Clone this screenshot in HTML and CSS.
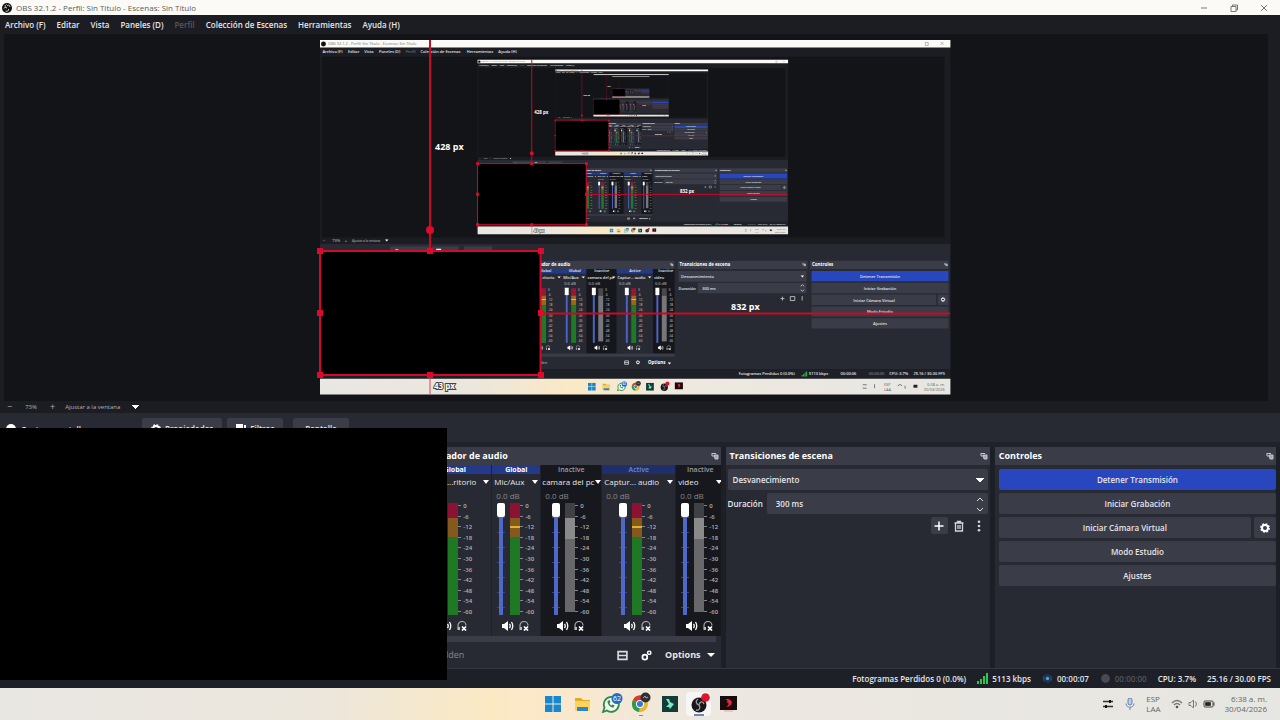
FILE: index.html
```html
<!DOCTYPE html>
<html lang="es">
<head>
    <meta charset="UTF-8">
    <meta name="viewport" content="width=device-width, initial-scale=1.0">
    <title>OBS 32.1.2 - Perfil: Sin Título - Escenas: Sin Título</title>
    <link rel="stylesheet" href="styles.css">
</head>
<body>
    <!-- Shared icons -->
    <svg class="defs" aria-hidden="true">
        <symbol id="obs" viewBox="0 0 20 20">
            <circle cx="10" cy="10" r="10" fill="#111"/>
            <path d="M9 3c-4 2-3 6 0 7M16 8c0-4-4-5-6-2M7 16c4 2 7-1 6-4M4 11c1-3 4-3 6-1" fill="none" stroke="#ccc" stroke-width="2"/>
        </symbol>
        <symbol id="speaker" viewBox="0 0 12 10">
            <path d="M0 3h2l4-3v10L2 7H0z" fill="#fff"/>
            <path d="M7.500 3q1.500 2 0 4M9.500 1q2.500 4 0 8" fill="none" stroke="#fff" stroke-width="1.300"/>
        </symbol>
        <symbol id="phones" viewBox="0 0 10 10">
            <path d="M1 9V4.500a4 4 0 0 1 8 0" fill="none" stroke="#aaa" stroke-width="1.200"/>
            <path d="M1 6h2v3H1z" fill="#bbb"/>
            <path d="M5 5.500l4 4M9 5.500l-4 4" stroke="#fff" stroke-width="1.700"/>
        </symbol>
        <symbol id="float" viewBox="0 0 8 8">
            <path d="M1 1.500h4M1 1v3h2" fill="none" stroke="#c5c6cb"/>
            <path d="M3 3h4v4H4z" fill="#a5a7ae" stroke="#c5c6cb"/>
        </symbol>
        <symbol id="gear" viewBox="0 0 10 10">
            <circle cx="5" cy="5" r="3" fill="none" stroke="#fff" stroke-width="2"/>
            <circle cx="5" cy="5" r="4.200" fill="none" stroke="#fff" stroke-width="1.400" stroke-dasharray="1.800 1.500"/>
        </symbol>
    </svg>

    <header class="titlebar">
        <svg class="app-icon"><use href="#obs"/></svg>
        <span class="title">OBS 32.1.2 - Perfil: Sin Título - Escenas: Sin Título</span>
        <button class="win-btn" aria-label="Minimizar"><svg viewBox="0 0 8 8"><path d="M1 4h6"/></svg></button>
        <button class="win-btn" aria-label="Restaurar"><svg viewBox="0 0 8 8"><path d="M1 2.500h5v5H1zM2.500 2.500V1h5v5H6"/></svg></button>
        <button class="win-btn" aria-label="Cerrar"><svg viewBox="0 0 8 8"><path d="M1 1l6 6M7 1L1 7"/></svg></button>
    </header>

    <nav class="menubar">
        <button>Archivo (F)</button>
        <button>Editar</button>
        <button>Vista</button>
        <button>Paneles (D)</button>
        <button disabled>Perfil</button>
        <button>Colección de Escenas</button>
        <button>Herramientas</button>
        <button>Ayuda (H)</button>
    </nav>

    <main class="preview">
        <svg class="scene" viewBox="320 40 630 355">
            <defs>
                <linearGradient id="bar">
                    <stop offset="0" stop-color="#e9e7e3"/>
                    <stop offset=".25" stop-color="#ece6dc"/>
                    <stop offset=".4" stop-color="#fbe9c4"/>
                    <stop offset=".55" stop-color="#efe9df"/>
                    <stop offset="1" stop-color="#e6e6e2"/>
                </linearGradient>
                <!-- Mixer channel, 48 wide -->
                <g id="scale" class="s-scale">
                    <text x="32" y="509">0</text><text x="32" y="520">-6</text><text x="32" y="530">-12</text>
                    <text x="32" y="541">-18</text><text x="32" y="551">-24</text><text x="32" y="562">-30</text>
                    <text x="32" y="572">-36</text><text x="32" y="583">-42</text><text x="32" y="593">-48</text>
                    <text x="32" y="604">-54</text><text x="32" y="614">-60</text>
                </g>
                <g id="strip-on">
                    <path d="M7 506h4v109H7z" fill="#4d63c4"/>
                    <path d="M5 503h8v15H5z" fill="#fff"/>
                    <path d="M18 504h10v15H18z" fill="#9c1535"/>
                    <path d="M18 519h10v20H18z" fill="#9a661c"/>
                    <path d="M18 526h10v2H18z" fill="#f0c22a"/>
                    <path d="M18 539h10v76H18z" fill="#1f7a28"/>
                    <use href="#scale"/>
                    <use href="#speaker" x="10" y="620" width="12" height="10"/>
                    <use href="#phones" x="27" y="620" width="10" height="10"/>
                </g>
                <g id="strip-off">
                    <path d="M7 506h4v109H7z" fill="#4d63c4"/>
                    <path d="M5 503h8v15H5z" fill="#fff"/>
                    <path d="M18 504h10v15H18z" fill="#47484b"/>
                    <path d="M18 519h10v93H18z" fill="#77777a"/>
                    <use href="#scale"/>
                    <use href="#speaker" x="10" y="620" width="12" height="10"/>
                    <use href="#phones" x="27" y="620" width="10" height="10"/>
                </g>
                <!-- Captured desktop, 1280x720 -->
                <g id="desktop">
                    <path d="M0 0h1280v720H0z" fill="#1c1d23"/>
                    <path d="M0 0h1280v15H0z" fill="#fbfaf6"/>
                    <circle cx="7" cy="8" r="5" fill="#111"/>
                    <text x="16" y="11" class="s-title">OBS 32.1.2 - Perfil: Sin Título - Escenas: Sin Título</text>
                    <path d="M1229 5h6v6h-6zM1260 4l6 6M1266 4l-6 6" fill="none" stroke="#777"/>
                    <g class="s-bold">
                        <text x="5" y="27">Archivo (F)</text><text x="57" y="27">Editar</text>
                        <text x="90" y="27">Vista</text><text x="120" y="27">Paneles (D)</text>
                        <text x="174" y="27" opacity=".35">Perfil</text>
                        <text x="204" y="27">Colección de Escenas</text>
                        <text x="298" y="27">Herramientas</text><text x="362" y="27">Ayuda (H)</text>
                    </g>
                    <path d="M4 34h1264v367H4z" fill="#131418"/>
                    <path d="M0 414h1280v254H0z" fill="#272a33"/>
                    <g class="s-text" opacity=".6">
                        <text x="6" y="410">−</text><text x="25" y="410">73%</text>
                        <text x="50" y="410">+</text><text x="65" y="410" class="s-small">Ajustar a la ventana</text>
                    </g>
                    <path d="M132 405h7l-3.500 4z" fill="#fff"/>
                    <path d="M142 419h80v22h-80zM227 419h55v22h-55zM292 419h58v22h-58z" fill="#3a3c47"/>
                    <path d="M152 428a4 3 0 0 1 8 0M236 424h10v4h-10z" fill="#fff"/>
                    <path d="M416 448h304v17H416zM726 448h264v17H726zM995 448h281v17H995z" fill="#3a3c47"/>
                    <g class="s-head">
                        <text x="421" y="459">Mezclador de audio</text>
                        <text x="730" y="459">Transiciones de escena</text>
                        <text x="999" y="459">Controles</text>
                        <text x="666" y="658">Options</text>
                    </g>
                    <use href="#float" x="710" y="452" width="8" height="8"/>
                    <use href="#float" x="979" y="452" width="8" height="8"/>
                    <use href="#float" x="1267" y="452" width="8" height="8"/>
                    <path d="M418 465h123v9H418zM602 465h74v9h-74z" fill="#233a8c"/>
                    <path d="M541 465h61v171h-61zM676 465h44v171h-44z" fill="#16171c"/>
                    <g class="s-text">
                        <text x="505" y="472">Global</text><text x="445" y="472">Global</text>
                        <text x="557" y="472">Inactive</text><text x="628" y="472">Active</text><text x="687" y="472">Inactive</text>
                        <text x="445" y="485">...ritorio</text><text x="494" y="485">Mic/Aux</text>
                        <text x="543" y="485">camara del pc</text><text x="604" y="485">Captur... audio</text><text x="678" y="485">video</text>
                    </g>
                    <path d="M482 480h7l-3.500 4zM531 480h7l-3.500 4zM593 480h7l-3.500 4zM666 480h7l-3.500 4zM706 655h7l-3.500 4z" fill="#fff"/>
                    <g class="s-text" opacity=".6">
                        <text x="496" y="498">0.0 dB</text><text x="545" y="498">0.0 dB</text>
                        <text x="607" y="498">0.0 dB</text><text x="680" y="498">0.0 dB</text>
                        <text x="447" y="658">den</text>
                    </g>
                    <use href="#strip-on" x="431"/><use href="#strip-on" x="492"/><use href="#strip-off" x="547"/>
                    <use href="#strip-on" x="614"/><use href="#strip-off" x="676"/>
                    <path d="M416 637h304v6H416z" fill="#3a3c47"/>
                    <path d="M618.500 651.500h8v7h-8zM618 655h9" fill="none" stroke="#ddd" stroke-width="1.500"/>
                    <use href="#gear" x="641" y="650" width="9" height="9"/>
                    <path d="M728 469h260v22H728zM767 493h221v21H767zM998 493h278v21H998zM998 517h253v21H998zM1254 517h22v21h-22zM998 541h278v21H998zM998 565h278v21H998z" fill="#3a3c47"/>
                    <path d="M998 469h278v21H998z" fill="#2846bd"/>
                    <path d="M976 478h7l-3.500 4z" fill="#fff"/>
                    <path d="M976 500l3.500-3 3.500 3M976 507l3.500 3 3.500-3M935 525h8M939 521v8M955 521h9v8h-9zM979 520v9" fill="none" stroke="#ddd" stroke-width="1.500"/>
                    <use href="#gear" x="1260" y="522" width="10" height="10"/>
                    <g class="s-text">
                        <text x="733" y="483">Desvanecimiento</text><text x="728" y="507">Duración</text><text x="776" y="507">300 ms</text>
                        <g text-anchor="middle">
                            <text x="1137" y="483">Detener Transmisión</text><text x="1137" y="507">Iniciar Grabación</text>
                            <text x="1125" y="531">Iniciar Cámara Virtual</text><text x="1137" y="555">Modo Estudio</text><text x="1137" y="579">Ajustes</text>
                        </g>
                    </g>
                    <path d="M0 669h1280v19H0z" fill="#1e2027"/>
                    <g class="s-text">
                        <text x="850" y="681">Fotogramas Perdidos 0 (0.0%)</text><text x="993" y="681">5113 kbps</text>
                        <text x="1057" y="681">00:00:06</text><text x="1114" y="681" opacity=".4">00:00:00</text>
                        <text x="1156" y="681">CPU: 3.7%</text><text x="1205" y="681">25.16 / 30.00 FPS</text>
                    </g>
                    <path d="M978 683v-3h2v3zM981 683v-5h2v5zM984 683v-8h2v8zM987 683v-10h2v10z" fill="#2fc04a"/>
                    <path d="M0 688h1280v32H0z" fill="url(#bar)"/>
                    <use href="#t-win" x="544" y="696" width="16" height="16"/>
                    <use href="#t-folder" x="573" y="696" width="17" height="16"/>
                    <use href="#t-wa" x="602" y="693" width="22" height="20"/>
                    <use href="#t-chrome" x="632" y="692" width="20" height="22"/>
                    <use href="#t-filmora" x="662" y="696" width="16" height="16"/>
                    <use href="#t-obs" x="691" y="693" width="19" height="20"/>
                    <use href="#t-red" x="720" y="695" width="17" height="16"/>
                    <g fill="#666" class="s-clock">
                        <text x="1145" y="702">ESP</text><text x="1145" y="713">LAA</text>
                        <text x="1233" y="702">6:38 a. m.</text><text x="1226" y="713">30/04/2026</text>
                    </g>
                    <path d="M1102 700h8M1102 707h8M1126 699v8M1173 702q5-5 9 0M1188 702v6" fill="none" stroke="#777" stroke-width="2"/>
                    <path d="M1205 700h8v6h-8z" fill="#222"/>
                    <path d="M0 428h447v252H0z"/>
                </g>
                <!-- Selection box, handles and spacing guides -->
                <g id="guides">
                    <path d="M430 40v210M541 313.500h409" stroke="#c80a25" stroke-width="2" fill="none"/>
                    <path d="M430 375v20" stroke="#d84a5c" fill="none"/>
                    <path d="M320 251h220.500v124H320z" stroke="#d3092a" stroke-width="2" fill="none"/>
                    <g fill="#dc0a2c">
                        <circle cx="430" cy="230" r="4"/>
                        <path d="M317 248h6v6h-6zM427 248h6v6h-6zM538 248h6v6h-6zM317 310h6v6h-6zM538 310h6v6h-6zM317 372h6v6h-6zM427 372h6v6h-6zM538 372h6v6h-6z"/>
                    </g>
                    <g class="s-px">
                        <text x="435" y="150">428 px</text>
                        <text x="731" y="310">832 px</text>
                        <text x="434" y="389" class="s-outline">43 px</text>
                    </g>
                </g>
                <!-- The capture shows itself, one level deeper each time -->
                <g id="shot1"><use href="#desktop"/></g>
                <g id="shot2"><use href="#desktop"/><use href="#shot1" transform="translate(320 40) scale(.4925)"/><use href="#guides"/></g>
                <g id="shot3"><use href="#desktop"/><use href="#shot2" transform="translate(320 40) scale(.4925)"/><use href="#guides"/></g>
                <g id="shot4"><use href="#desktop"/><use href="#shot3" transform="translate(320 40) scale(.4925)"/><use href="#guides"/></g>
                <g id="shot5"><use href="#desktop"/><use href="#shot4" transform="translate(320 40) scale(.4925)"/><use href="#guides"/></g>
            </defs>
            <use href="#shot5" transform="translate(320 40) scale(.4925)"/>
            <use href="#guides"/>
        </svg>
    </main>

    <div class="zoombar">
        <button aria-label="Alejar">−</button>
        <span class="zoom-value">73%</span>
        <button class="plus" aria-label="Acercar">+</button>
        <select class="zoom-mode" aria-label="Escala de la vista previa"><option>Ajustar a la ventana</option></select>
    </div>

    <div class="contextbar">
        <svg class="eye" viewBox="0 0 12 12"><circle cx="6" cy="6" r="6"/></svg>
        <span class="source-name">Captura pantalla</span>
        <button><svg viewBox="0 0 10 10"><use href="#gear"/></svg>Propiedades</button>
        <button><svg viewBox="0 0 10 10"><path d="M0 0h7v7H0zM8 1h2v9H3V8h5z" fill="#fff"/></svg>Filtros</button>
        <button class="wide">Pantalla</button>
    </div>

    <section class="docks">
        <div class="dock-space"></div>
        <div class="dock">
            <h2>Mezclador de audio <svg><use href="#float"/></svg></h2>
            <div class="mixer">
                <div class="strip first">
                    <div class="state global">Global</div>
                    <button class="name">Audi...ritorio</button>
                    <div class="db">0.0 dB</div>
                    <div class="levels">
                        <input type="range" class="fader" value="100" aria-label="Volumen escritorio">
                        <div class="meter"></div>
                        <ul class="scale"><li>0<li>-6<li>-12<li>-18<li>-24<li>-30<li>-36<li>-42<li>-48<li>-54<li>-60</ul>
                    </div>
                    <div class="strip-btns">
                        <button aria-label="Silenciar"><svg class="spk"><use href="#speaker"/></svg></button>
                        <button aria-label="Monitorizar"><svg><use href="#phones"/></svg></button>
                    </div>
                </div>
                <div class="strip mic">
                    <div class="state global">Global</div>
                    <button class="name">Mic/Aux</button>
                    <div class="db">0.0 dB</div>
                    <div class="levels">
                        <input type="range" class="fader" value="100" aria-label="Volumen Mic/Aux">
                        <div class="meter peak"></div>
                        <ul class="scale"><li>0<li>-6<li>-12<li>-18<li>-24<li>-30<li>-36<li>-42<li>-48<li>-54<li>-60</ul>
                    </div>
                    <div class="strip-btns">
                        <button aria-label="Silenciar"><svg class="spk"><use href="#speaker"/></svg></button>
                        <button aria-label="Monitorizar"><svg><use href="#phones"/></svg></button>
                    </div>
                </div>
                <div class="strip camera off">
                    <div class="state">Inactive</div>
                    <button class="name">camara del pc</button>
                    <div class="db">0.0 dB</div>
                    <div class="levels">
                        <input type="range" class="fader" value="100" aria-label="Volumen camara del pc">
                        <div class="meter"></div>
                        <ul class="scale"><li>0<li>-6<li>-12<li>-18<li>-24<li>-30<li>-36<li>-42<li>-48<li>-54<li>-60</ul>
                    </div>
                    <div class="strip-btns">
                        <button aria-label="Silenciar"><svg class="spk"><use href="#speaker"/></svg></button>
                        <button aria-label="Monitorizar"><svg><use href="#phones"/></svg></button>
                    </div>
                </div>
                <div class="strip capture">
                    <div class="state active">Active</div>
                    <button class="name">Captur... audio</button>
                    <div class="db">0.0 dB</div>
                    <div class="levels">
                        <input type="range" class="fader" value="100" aria-label="Volumen captura de audio">
                        <div class="meter peak"></div>
                        <ul class="scale"><li>0<li>-6<li>-12<li>-18<li>-24<li>-30<li>-36<li>-42<li>-48<li>-54<li>-60</ul>
                    </div>
                    <div class="strip-btns">
                        <button aria-label="Silenciar"><svg class="spk"><use href="#speaker"/></svg></button>
                        <button aria-label="Monitorizar"><svg><use href="#phones"/></svg></button>
                    </div>
                </div>
                <div class="strip video off">
                    <div class="state">Inactive</div>
                    <button class="name">video</button>
                    <div class="db">0.0 dB</div>
                    <div class="levels">
                        <input type="range" class="fader" value="100" aria-label="Volumen video">
                        <div class="meter"></div>
                        <ul class="scale"><li>0<li>-6<li>-12<li>-18<li>-24<li>-30<li>-36<li>-42<li>-48<li>-54<li>-60</ul>
                    </div>
                    <div class="strip-btns">
                        <button aria-label="Silenciar"><svg class="spk"><use href="#speaker"/></svg></button>
                        <button aria-label="Monitorizar"><svg><use href="#phones"/></svg></button>
                    </div>
                </div>
            </div>
            <div class="scrollbar"></div>
            <div class="mixer-footer">
                <span class="hidden-count">1 Hidden</span>
                <button aria-label="Diseño"><svg viewBox="0 0 10 10"><path d="M1 1.500h8v7H1zM1 5h8" fill="none" stroke="#ddd" stroke-width="1.500"/></svg></button>
                <button aria-label="Propiedades de audio"><svg viewBox="0 0 10 10"><circle cx="3.500" cy="6.500" r="2.200" fill="none" stroke="#fff" stroke-width="1.600"/><circle cx="7.500" cy="2.500" r="1.500" fill="none" stroke="#fff" stroke-width="1.300"/></svg></button>
                <button class="options">Options</button>
            </div>
        </div>

        <div class="dock">
            <h2>Transiciones de escena <svg><use href="#float"/></svg></h2>
            <div class="dock-body">
                <select class="transition" aria-label="Transición"><option>Desvanecimiento</option></select>
                <div class="duration">
                    <label for="duration">Duración</label>
                    <div class="spin">
                        <input type="text" id="duration" value="300 ms">
                        <svg viewBox="0 0 8 16"><path d="M1 5l3-3 3 3M1 12l3 3 3-3"/></svg>
                    </div>
                </div>
                <div class="tools">
                    <button class="add" aria-label="Añadir"><svg viewBox="0 0 12 12"><path d="M6 1.500v9M1.500 6h9" stroke="#fff" stroke-width="1.500"/></svg></button>
                    <button aria-label="Eliminar"><svg viewBox="0 0 12 12"><path d="M1.500 3h9M4.500 3V1.500h3V3M2.500 3.500V11h7V3.500M5 5v4M7 5v4" fill="none" stroke="#d5d6da" stroke-width="1.300"/></svg></button>
                    <button aria-label="Más"><svg viewBox="0 0 12 12"><circle cx="6" cy="1.800" r="1.300"/><circle cx="6" cy="6" r="1.300"/><circle cx="6" cy="10.200" r="1.300"/></svg></button>
                </div>
            </div>
        </div>

        <div class="dock">
            <h2>Controles <svg><use href="#float"/></svg></h2>
            <div class="dock-body controls">
                <button class="primary">Detener Transmisión</button>
                <button>Iniciar Grabación</button>
                <div class="split">
                    <button>Iniciar Cámara Virtual</button>
                    <button class="cog" aria-label="Configurar cámara virtual"><svg><use href="#gear"/></svg></button>
                </div>
                <button>Modo Estudio</button>
                <button>Ajustes</button>
            </div>
        </div>
    </section>

    <footer class="statusbar">
        <span>Fotogramas Perdidos 0 (0.0%)</span>
        <span><svg viewBox="0 0 11 11"><path d="M0 11V8h2v3zM3 11V6h2v5zM6 11V3h2v8zM9 11V0h2v11z" fill="#2fc84c"/></svg>5113 kbps</span>
        <span><svg viewBox="0 0 10 10"><circle cx="5" cy="5" r="4" fill="#1d3556"/><circle cx="5" cy="5" r="1.500" fill="#5a9be0"/><path d="M1.500 3v4M8.500 3v4" stroke="#234f80"/></svg>00:00:07</span>
        <span class="rec"><svg viewBox="0 0 10 10"><circle cx="5" cy="5" r="4" fill="#4a4b52"/></svg>00:00:00</span>
        <span>CPU: 3.7%</span>
        <span>25.16 / 30.00 FPS</span>
    </footer>

    <div class="black-window"></div>

    <div class="taskbar">
        <div class="apps">
            <button aria-label="Inicio"><svg><symbol id="t-win" viewBox="0 0 16 16"><path d="M0 0h7.500v7.500H0zM8.500 0H16v7.500H8.500zM0 8.500h7.500V16H0zM8.500 8.500H16V16H8.500z" fill="#1787cf"/></symbol><use href="#t-win" x="4" y="4" width="16" height="16"/></svg></button>
            <button aria-label="Explorador"><svg><symbol id="t-folder" viewBox="0 0 17 16"><path d="M1 2h6l2 2h7v11H1z" fill="#e2a92c"/><path d="M1 5h15v10H1z" fill="#fbd45c"/><path d="M3 11h11v4H3z" fill="#2d86c9"/></symbol><use href="#t-folder" x="4" y="4" width="17" height="16"/></svg></button>
            <button aria-label="WhatsApp"><svg><symbol id="t-wa" viewBox="0 0 22 20"><path d="M2 19l1.500-4.500A7.500 7.500 0 1 1 6 17.500z" fill="#f3f5ef" stroke="#2f8a4a" stroke-width="1.800"/><path d="M6.500 8c0 4 3 6.500 6 6.500l1-2-2-1-1 1c-1-.5-2-1.500-2-2.500l1-1-1-2z" fill="#2f8a4a"/><circle cx="16" cy="5.500" r="5.500" fill="#1d6fc4"/><text x="16" y="8" class="badge">62</text></symbol><use href="#t-wa" x="2" y="1" width="22" height="20"/></svg></button>
            <button aria-label="Chrome"><svg><symbol id="t-chrome" viewBox="0 0 20 22"><circle cx="9" cy="12" r="8" fill="#e8b92a"/><path d="M9 12L2 8a8 8 0 0 1 14-1z" fill="#da3b30"/><path d="M9 12L2 8a8 8 0 0 0 6 12z" fill="#2f9a4c"/><circle cx="9" cy="12" r="4" fill="#fff"/><circle cx="9" cy="12" r="3" fill="#3578d8"/><circle cx="14.500" cy="5.500" r="5" fill="#2f3034"/><path d="M12 6l2-2 1 2 2-1" stroke="#aaa" fill="none"/></symbol><use href="#t-chrome" x="3" y="0" width="20" height="22"/><path d="M11 23.500h4" stroke="#8a8d95"/></svg></button>
            <button aria-label="Filmora"><svg><symbol id="t-filmora" viewBox="0 0 16 16"><path d="M0 0h16v16H0z" fill="#153b38"/><path d="M4 3h3l1 3 4 2-4 5-1-2H4l3-3z" fill="#7ce8c6"/></symbol><use href="#t-filmora" x="5" y="4" width="16" height="16"/></svg></button>
            <button class="current" aria-label="OBS"><svg><symbol id="t-obs" viewBox="0 0 19 20"><circle cx="8" cy="12" r="7.500" fill="#18181a"/><path d="M7 6c-3 2-2 5 1 6M13 11c-1-3-4-3-5 1M5 17c3 1 5-2 3-5" fill="none" stroke="#999" stroke-width="1.400"/><circle cx="14.500" cy="4.500" r="4.300" fill="#e01529"/></symbol><use href="#t-obs" x="5" y="1" width="19" height="20"/><path d="M8 23h10" stroke="#6f86b8" stroke-width="2"/></svg></button>
            <button aria-label="Grabador"><svg><symbol id="t-red" viewBox="0 0 17 16"><path d="M0 0h17v14H0z" fill="#170b0e"/><path d="M4 15h9" stroke="#e4a3a8"/><path d="M5 3c9-1 9 7 1 8 3-2 4-4 0-5 2 0 2-2-1-3z" fill="#e8263c"/></symbol><use href="#t-red" x="5" y="4" width="17" height="16"/></svg></button>
        </div>
        <div class="tray">
            <svg viewBox="0 0 12 12"><path d="M1 3.500h10M1 8.500h10" stroke="#333" stroke-width="1.500"/><path d="M7 2h2v3H7zM3 7h2v3H3z" fill="#111"/></svg>
            <svg viewBox="0 0 12 12"><rect x="4" y="0" width="4" height="7" rx="2" fill="#b9cbea" stroke="#6d83b0"/><path d="M2 5.500c0 5 8 5 8 0M6 9.500V12" fill="none" stroke="#6d83b0"/></svg>
            <span class="lang">ESP<br>LAA</span>
            <span class="status-icons">
                <svg viewBox="0 0 12 12"><path d="M1 5q5-5 10 0M3 7q3-3 6 0" fill="none" stroke="#777" stroke-width="1.500"/><circle cx="6" cy="9" r="1.300" fill="#555"/></svg>
                <svg viewBox="0 0 12 12"><path d="M2 4.500h2L6.500 2v8L4 7.500H2zM8.500 3.500q2 2.500 0 5" fill="none" stroke="#777"/></svg>
                <svg viewBox="0 0 12 12"><rect x="1" y="3" width="9" height="6" rx="1" fill="none" stroke="#444"/><path d="M2.500 4.500h5v3h-5zM11 4.500v3" fill="#222" stroke="#444"/></svg>
            </span>
            <span class="clock">6:38 a. m.<br>30/04/2026</span>
        </div>
    </div>
</body>
</html>
```
FILE: styles.css
```css
* {
    box-sizing: border-box;
}
body {
    margin: 0;
    height: 100vh;
    min-height: 600px;
    display: flex;
    flex-direction: column;
    overflow: hidden;
    background-color: #1c1d23;
    color: #e6e6ea;
    font-family: "Open Sans", "Noto Sans", sans-serif;
    font-size: 8px;
    font-weight: 600;
    line-height: 12px;
}
button, input, select {
    font: inherit;
    color: inherit;
    background: none;
    border: none;
    padding: 0;
    margin: 0;
}
svg {
    display: block;
    flex: none;
}
.defs {
    width: 0;
    height: 0;
    position: absolute;
}

/* Title bar and menu */
.titlebar {
    height: 15px;
    display: flex;
    align-items: center;
    background-color: #fbfaf6;
    color: #5c5c5c;
    padding: 0 12px 0 2px;
    font-weight: 400;
}
.app-icon {
    width: 10px;
    height: 10px;
    margin-right: 4px;
}
.title {
    flex: 1;
}
.win-btn {
    margin-left: 22px;
}
.win-btn svg {
    width: 8px;
    height: 8px;
    fill: none;
    stroke: #777;
}
.menubar {
    height: 19px;
    display: flex;
    align-items: center;
    gap: 11px;
    padding: 0 5px;
}
.menubar button:disabled {
    color: #55565d;
}

/* Preview */
.preview {
    flex: 1;
    min-height: 0;
    margin: 0 12px 0 4px;
    padding: 6px 2px 6px 0;
    background-color: #131418;
}
.scene {
    width: 100%;
    height: 100%;
    overflow: visible;
}
.s-title {
    font-size: 8px;
    font-weight: 400;
    fill: #777;
}
.s-bold, .s-text {
    font-size: 8px;
    font-weight: 600;
    fill: #e6e6ea;
}
.s-head {
    font-size: 9px;
    font-weight: 700;
    fill: #fff;
}
.s-small {
    font-size: 6px;
}
.s-scale {
    font-size: 6px;
    fill: #aaa;
}
.s-clock {
    font-size: 8px;
    font-weight: 400;
}
.s-px {
    font-size: 9px;
    font-weight: 700;
    fill: #fff;
}
.s-outline {
    font-size: 8px;
    stroke: #444;
    stroke-width: 2px;
    paint-order: stroke;
}
.zoombar {
    height: 12px;
    display: flex;
    align-items: center;
    padding-left: 7px;
    font-size: 6px;
    font-weight: 400;
    color: #b0b1b6;
}
.zoom-value {
    margin: 0 13px;
}
.zoombar .plus {
    margin-right: 10px;
}
.zoombar button {
    font-size: 9px;
}
.zoom-mode, .transition {
    appearance: none;
    background-image: linear-gradient(to top right, transparent 50%, #fff 50%), linear-gradient(to top left, transparent 50%, #fff 50%);
    background-repeat: no-repeat;
    background-size: 4px 4px;
}
.zoom-mode {
    width: 74px;
    background-position: right 4px center, right 0 center;
}
.contextbar {
    height: 34px;
    display: flex;
    align-items: flex-start;
    gap: 5px;
    padding: 5px 6px;
    background-color: #272933;
    border-bottom: 5px solid #20222a;
}
.contextbar svg {
    width: 10px;
    height: 10px;
    fill: #fff;
}
.contextbar .eye {
    margin-top: 6px;
}
.source-name {
    width: 116px;
    padding-top: 6px;
}
.contextbar button {
    height: 22px;
    display: flex;
    align-items: center;
    gap: 4px;
    padding: 0 9px;
    border-radius: 2px;
    background-color: #3a3c47;
}
.contextbar .wide {
    margin-left: 5px;
    padding: 0 12px;
}

/* Docks */
.docks {
    height: 221px;
    display: grid;
    grid-template-columns: 411fr 304fr 264fr 281fr;
    gap: 5px;
    padding-right: 4px;
    background-color: #1d1f27;
}
.dock-space, .dock {
    min-width: 0;
    background-color: #272a33;
}
.dock {
    display: flex;
    flex-direction: column;
}
.dock h2 {
    height: 18px;
    margin: 0;
    display: flex;
    align-items: center;
    justify-content: space-between;
    padding: 0 2px 0 4px;
    background-color: #3a3c47;
    font-size: 9px;
    font-weight: 700;
    color: #fff;
}
.dock h2 svg {
    width: 8px;
    height: 8px;
}
.mixer {
    height: 171px;
    display: flex;
    padding-left: 2px;
    overflow: hidden;
}
.strip {
    flex: none;
    display: flex;
    flex-direction: column;
    border-right: 1px solid #1f2129;
}
.strip.first {
    width: 74px;
}
.strip.mic {
    width: 49px;
}
.strip.camera {
    width: 61px;
}
.strip.capture {
    width: 74px;
}
.strip.video {
    width: 49px;
}
.off {
    background-color: #17181d;
}
.state {
    height: 9px;
    line-height: 9px;
    font-size: 7px;
    text-align: center;
    color: #9a9ba0;
}
.global {
    background-color: #24398a;
    font-weight: 700;
    color: #fff;
}
.active {
    background-color: #1e2f6b;
    color: #6f86cc;
}
.name {
    display: flex;
    align-items: center;
    justify-content: space-between;
    height: 16px;
    padding: 0 2px;
    font-weight: 400;
    white-space: nowrap;
}
.name::after, .options::after {
    content: "";
    border: 4px solid transparent;
    border-top-color: #fff;
    border-bottom: none;
}
.name::after {
    border-left-width: 3px;
    border-right-width: 3px;
}
.first .name {
    justify-content: flex-end;
    gap: 7px;
}
.camera .name {
    padding: 0 0 0 1px;
}
.db {
    height: 12px;
    padding-left: 4px;
    font-weight: 400;
    color: #85868c;
}
.levels {
    height: 114px;
    display: flex;
    padding: 1px 0 1px 5px;
}
.first .levels, .capture .levels {
    padding-left: 17px;
}
.camera .levels {
    padding-left: 11px;
}
.fader {
    appearance: none;
    writing-mode: vertical-lr;
    direction: rtl;
    width: 8px;
    height: 112px;
    margin-right: 5px;
    background: linear-gradient(#4f69c8, #4f69c8) center / 4px 100% no-repeat, repeating-linear-gradient(transparent 0 14px, #334790 14px 15px);
}
.fader::-webkit-slider-thumb {
    appearance: none;
    width: 8px;
    height: 14px;
    border-radius: 2px;
    background-color: #fff;
}
.meter {
    width: 10px;
    height: 112px;
    background: linear-gradient(#8c1233 15px, #85591c 15px 34px, #1e7824 34px);
}
.meter.peak {
    background: linear-gradient(#8c1233 15px, #85591c 15px 23px, #e0b32a 23px 25px, #85591c 25px 34px, #1e7824 34px);
}
.off .meter {
    height: 109px;
    background: linear-gradient(#404144 15px, #8a8a8b 15px 36px, #68686a 36px);
}
.scale {
    list-style: none;
    display: flex;
    flex-direction: column;
    justify-content: space-between;
    height: 112px;
    margin: 0;
    padding: 0;
    font-size: 6px;
    line-height: 6px;
    color: #b2b3b8;
}
.scale li::before {
    content: "";
    display: inline-block;
    width: 3px;
    height: 1px;
    margin-right: 2px;
    vertical-align: 2px;
    background-color: #85868c;
}
.strip-btns {
    display: flex;
    align-items: center;
    gap: 5px;
    height: 20px;
    padding-left: 10px;
}
.first .strip-btns, .capture .strip-btns {
    padding-left: 22px;
}
.camera .strip-btns {
    padding-left: 16px;
}
.strip-btns svg {
    width: 10px;
    height: 10px;
}
.strip-btns .spk {
    width: 12px;
}
.scrollbar {
    height: 6px;
    margin-right: 5px;
    background-color: #3a3c47;
}
.mixer-footer {
    flex: 1;
    display: flex;
    align-items: center;
    gap: 13px;
    padding: 0 6px 0 10px;
}
.mixer-footer svg {
    width: 11px;
    height: 11px;
}
.hidden-count {
    flex: 1;
    font-size: 9px;
    font-weight: 400;
    color: #85868c;
}
.options {
    display: flex;
    align-items: center;
    gap: 6px;
    font-size: 9px;
    font-weight: 700;
}
.dock-body {
    display: flex;
    flex-direction: column;
    gap: 3px;
    padding: 4px 2px;
}
.transition {
    height: 21px;
    padding: 0 5px;
    border-radius: 2px;
    background-color: #3a3c47;
    background-position: right 8px center, right 4px center;
}
.duration {
    display: flex;
    align-items: center;
    gap: 4px;
    height: 21px;
}
.duration label {
    flex: none;
}
.spin {
    flex: 1;
    display: flex;
    align-items: center;
    height: 21px;
    padding: 0 4px 0 9px;
    border-radius: 2px;
    background-color: #3a3c47;
}
.spin input {
    flex: 1;
    min-width: 0;
}
.spin svg {
    width: 8px;
    height: 16px;
    fill: none;
    stroke: #ddd;
}
.tools {
    display: flex;
    justify-content: flex-end;
    gap: 3px;
}
.tools button {
    width: 17px;
    height: 17px;
    display: flex;
    align-items: center;
    justify-content: center;
    border-radius: 2px;
}
.tools .add {
    background-color: #3a3c47;
}
.tools svg {
    width: 12px;
    height: 12px;
    fill: #d5d6da;
}
.controls {
    padding: 4px 0 4px 4px;
}
.controls button {
    height: 21px;
    border-radius: 2px;
    background-color: #3a3c47;
}
.controls .primary {
    background-color: #2846bd;
}
.split {
    display: flex;
    gap: 3px;
}
.split button {
    flex: 1;
}
.split .cog {
    flex: none;
    width: 22px;
    padding: 0 6px;
}
.cog svg {
    width: 10px;
    height: 10px;
}

/* Status bar */
.statusbar {
    height: 20px;
    display: flex;
    align-items: center;
    justify-content: flex-end;
    gap: 11px;
    padding-right: 9px;
    background-color: #1e2027;
    border-top: 1px solid #33353e;
}
.statusbar span {
    display: flex;
    align-items: center;
    gap: 4px;
}
.statusbar svg {
    width: 11px;
    height: 11px;
}
.rec {
    color: #55565d;
}

/* Window lying over the lower left part of the screen */
.black-window {
    position: absolute;
    left: 0;
    bottom: 40px;
    width: 447px;
    height: 252px;
    background-color: #000;
}

/* Windows taskbar */
.taskbar {
    height: 32px;
    display: grid;
    grid-template-columns: 1fr auto 1fr;
    align-items: center;
    background: linear-gradient(to right, #e9e7e3, #ece6dc 25%, #fbe9c4 38%, #fae8cc 44%, #ede8e0 54%, #e6e6e2);
    color: #666;
    font-weight: 400;
}
.apps {
    grid-column: 2;
    display: flex;
    gap: 4px;
}
.apps svg {
    width: 25px;
    height: 24px;
}
.apps .current {
    border-radius: 3px;
    background-color: #f8f6f4;
}
.badge {
    font-size: 7px;
    text-anchor: middle;
    fill: #fff;
}
.tray {
    display: flex;
    align-items: center;
    justify-content: flex-end;
    gap: 10px;
    padding-right: 13px;
    line-height: 10px;
}
.tray svg {
    width: 12px;
    height: 12px;
}
.status-icons {
    display: flex;
    gap: 4px;
}
.clock {
    text-align: right;
}
```
